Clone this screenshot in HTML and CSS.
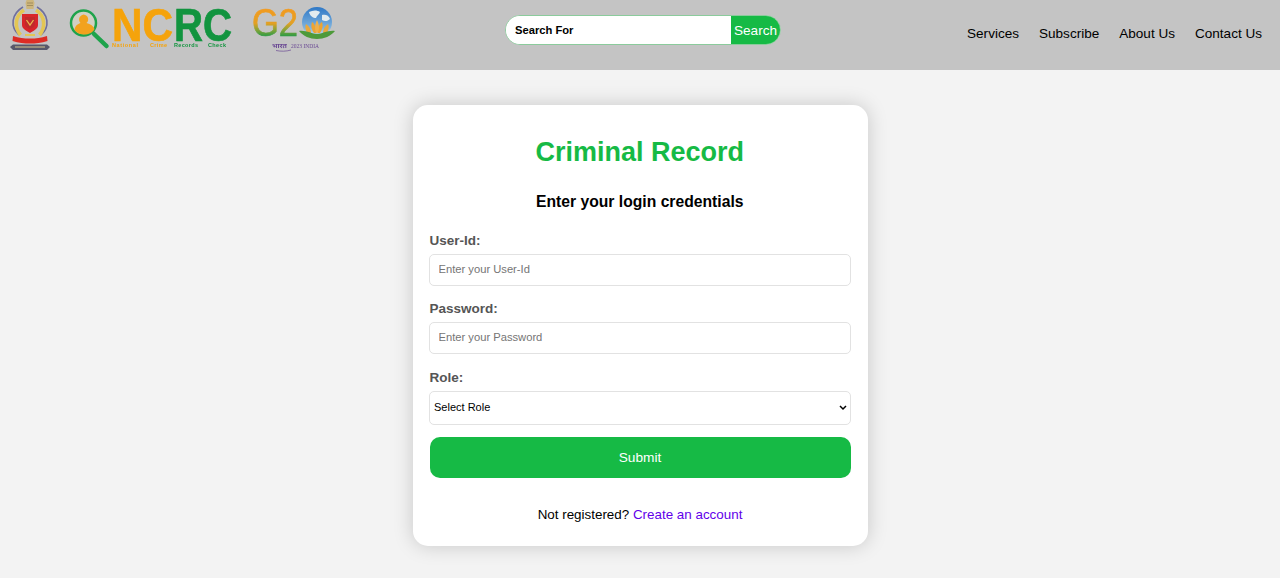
FILE: index.html
```html
<!DOCTYPE html>
<html lang="en">
<head>
<meta charset="utf-8">
<title>Criminal Record</title>
<link rel="stylesheet" href="styles.css">
</head>
<body>
<header class="topbar">
  <div class="logos">
    <svg class="logo logo-emblem" width="42" height="52" viewBox="0 0 42 52" aria-hidden="true">
      <path d="M16.500 0h7l1 3-1 6h-7l-1-6z" fill="#cdb67c"/>
      <path d="M17 3h6M17 5.500h6" stroke="#8f7d55" stroke-width=".7"/>
      <path d="M9 35C0 27 1 14 13 7" fill="none" stroke="#6f6f9c" stroke-width="1.600"/>
      <path d="M31 35c9-8 8-21-4-28" fill="none" stroke="#6f6f9c" stroke-width="1.600"/>
      <path d="M10.500 35C4 27 5 16 14 10" fill="none" stroke="#e3c655" stroke-width="3.600"/>
      <path d="M29.500 35c6.500-8 5.500-19-3.500-25" fill="none" stroke="#e3c655" stroke-width="3.600"/>
      <path d="M12 14h16v11c0 4-5 6-8 8-3-2-8-4-8-8z" fill="#d9252b"/>
      <path d="M15 17h10v7c0 3-3 4-5 5-2-1-5-2-5-5z" fill="#c02a2c"/>
      <path d="M16.500 20l3.500 5 3.500-5" fill="none" stroke="#eab84e" stroke-width="1.300"/>
      <path d="M15 34h10v2H15z" fill="#e3c655"/>
      <path d="M3 36c6 2 11 2.500 17 2.500s11-.5 17-2.500l.5 5c-6 2-12 2.500-17.500 2.500S8.500 43 2.500 41z" fill="#dc2c25"/>
      <path d="M0 47l3-2.500h34l3 2.500-3 3H3z" fill="#57576a"/>
      <path d="M5 47h30" stroke="#d6c68e" stroke-width="1"/>
    </svg>
    <svg class="logo logo-ncrc" width="164" height="44" viewBox="0 0 164 44" aria-hidden="true">
      <circle cx="13.500" cy="16" r="12.500" fill="#d2d0c4" stroke="#1ea34b" stroke-width="2.500"/>
      <path d="M4.500 23c.5-4 2.500-5.500 6-7-2-2-2.500-7 3-8.500 5 .5 6 6 3 8.500 4 1 7 3 8 6-2 4-6 5.500-10 5.500-4 0-8-1.500-10-4.500z" fill="#f2a21e"/>
      <path d="M24 27l12.500 12" stroke="#1ea34b" stroke-width="4.500" stroke-linecap="round"/>
      <text class="ncrc-big ncrc-orange" x="42" y="34" textLength="61" lengthAdjust="spacingAndGlyphs">NC</text>
      <text class="ncrc-big ncrc-green" x="104" y="34" textLength="58" lengthAdjust="spacingAndGlyphs">RC</text>
      <text class="ncrc-small ncrc-orange" x="42" y="40" textLength="26">National</text>
      <text class="ncrc-small ncrc-orange" x="80" y="40" textLength="17">Crime</text>
      <text class="ncrc-small ncrc-green" x="104" y="40" textLength="24">Records</text>
      <text class="ncrc-small ncrc-green" x="138" y="40" textLength="18">Check</text>
    </svg>
    <svg class="logo logo-g20" width="84" height="46" viewBox="0 0 84 46" aria-hidden="true">
      <defs>
        <linearGradient id="g20tri" gradientUnits="userSpaceOnUse" x1="0" y1="1" x2="0" y2="29">
          <stop offset="0" stop-color="#f39a1f"/>
          <stop offset=".55" stop-color="#e3a024"/>
          <stop offset=".78" stop-color="#86a437"/>
          <stop offset="1" stop-color="#2f9b45"/>
        </linearGradient>
        <linearGradient id="g20globe" x1="0" y1="0" x2="0" y2="1">
          <stop offset="0" stop-color="#2f78c6"/>
          <stop offset=".7" stop-color="#7fb3de"/>
          <stop offset="1" stop-color="#d5e6f3"/>
        </linearGradient>
      </defs>
      <text class="g20-text" x="0" y="29" textLength="46" lengthAdjust="spacingAndGlyphs" fill="url(#g20tri)" stroke="url(#g20tri)">G2</text>
      <circle cx="65" cy="15" r="15" fill="url(#g20globe)"/>
      <path d="M57 5c4-2 8-2 11 0-1 3-3 3-4 6-3 0-6-2-7-6zM70 8c3-1 7 0 8 4-2 2-5 3-8 1z" fill="#e2ebef"/>
      <path d="M55 26c-2-4-2-7-1-9 3 2 5 5 5 9zM75 26c2-4 2-7 1-9-3 2-5 5-5 9z" fill="#e9a83e"/>
      <path d="M62 26c-3-4-3-8-2-11 3 2 4 6 4 11zM68 26c3-4 3-8 2-11-3 2-4 6-4 11z" fill="#eea432"/>
      <path d="M65 27c-3-5-2-10 0-14 2 4 3 9 0 14z" fill="#f0b04a"/>
      <path d="M47 24c7-1 13 3 18 3s11-4 18-3c-4 5-11 8-18 8s-14-3-18-8z" fill="#4d9a3a"/>
      <text class="g20-hi" x="20" y="41">भारत</text>
      <text class="g20-year" x="39" y="41">2023 INDIA</text>
      <path d="M24 43.500c5 1 10 1 15-.5" fill="none" stroke="#6b4a94" stroke-width=".7"/>
    </svg>
  </div>
  <form class="search">
    <input class="search-input" type="text" placeholder="Search For">
    <button class="search-btn" type="button">Search</button>
  </form>
  <nav class="nav">
    <a href="#">Services</a>
    <a href="#">Subscribe</a>
    <a href="#">About Us</a>
    <a href="#">Contact Us</a>
  </nav>
</header>
<main class="page">
  <form class="card">
    <h1 class="title">Criminal Record</h1>
    <h2 class="subtitle">Enter your login credentials</h2>
    <label class="label" for="uid">User-Id:</label>
    <input class="field" id="uid" type="text" placeholder="Enter your User-Id">
    <label class="label" for="pw">Password:</label>
    <input class="field" id="pw" type="password" placeholder="Enter your Password">
    <label class="label label-role" for="role">Role:</label>
    <select class="select" id="role">
      <option>Select Role</option>
    </select>
    <button class="submit" type="button">Submit</button>
    <p class="foot">Not registered? <a href="#">Create an account</a></p>
  </form>
</main>
</body>
</html>
```
FILE: styles.css
```css
* { box-sizing: border-box; }
html, body { margin: 0; height: 100%; }
body {
  background: #f3f3f3;
  font-family: "Liberation Sans", Arial, sans-serif;
  color: #000;
  overflow: hidden;
}
.topbar {
  height: 70px;
  background: #c4c4c4;
  display: grid;
  grid-template-columns: 495px 276px 1fr;
  padding: 0 18px 0 10px;
}
.logos { display: flex; align-items: flex-start; }
.logo { filter: blur(.35px); flex: none; overflow: visible; }
.logo-ncrc { margin: 7px 0 0 18px; }
.logo-g20 { margin: 7px 0 0 18px; }
.ncrc-big { font: 700 46px "Liberation Sans", sans-serif; stroke-width: .7px; }
.ncrc-small { font: 700 5.500px "Liberation Sans", sans-serif; }
.ncrc-orange { fill: #f5a30b; stroke: #f5a30b; }
.ncrc-small.ncrc-orange, .ncrc-small.ncrc-green { stroke: none; }
.ncrc-green { fill: #12943f; stroke: #12943f; }
.g20-text { font: 400 38px "Liberation Sans", sans-serif; stroke-width: .7px; }
.g20-hi { font: 700 7px "Noto Sans", "Noto Sans CJK SC", sans-serif; fill: #6b4a94; }
.g20-year { font: 400 5.500px "Liberation Serif", serif; fill: #6b4a94; }
.search {
  margin-top: 15px;
  height: 30px;
  display: flex;
  border: 1px solid #8bcb9c;
  border-radius: 15px;
  overflow: hidden;
  background: #fff;
}
.search-input {
  flex: 1;
  min-width: 0;
  border: 0;
  outline: 0;
  padding: 0 0 0 9px;
  font: 700 11.200px "Liberation Sans", sans-serif;
}
.search-input::placeholder { color: #000; opacity: 1; }
.search-btn {
  width: 49px;
  border: 0;
  padding: 0;
  background: #16ba45;
  color: #fff;
  font: 400 13.600px "Liberation Sans", sans-serif;
}
.nav {
  display: flex;
  justify-content: flex-end;
  gap: 20px;
  margin-top: 26px;
  font-size: 13.550px;
  line-height: 16px;
  align-self: start;
}
.nav a { color: #000; text-decoration: none; }
.page {
  display: flex;
  justify-content: center;
  padding-top: 35px;
}
.card {
  width: 455px;
  height: 441px;
  padding: 31px 17px 0 16.500px;
  background: #fff;
  border-radius: 15px;
  box-shadow: 0 0 20px rgba(0, 0, 0, .18);
  display: flex;
  flex-direction: column;
}
.title {
  margin: 0;
  color: #16ba45;
  font-size: 27px;
  line-height: 33px;
  text-align: center;
}
.subtitle {
  margin: 24px 0 0;
  font-size: 15.700px;
  line-height: 18px;
  text-align: center;
}
.label {
  margin-top: 15px;
  padding-left: .5px;
  color: #555;
  font-size: 13.500px;
  font-weight: 700;
  line-height: 16px;
}
.label-role { margin-top: 16px; }
.subtitle + .label { margin-top: 22px; }
.field {
  height: 32px;
  margin-top: 5px;
  padding: 0 8.500px 2px;
  border: 1px solid #e2e2e2;
  border-radius: 5px;
  font: 400 11.200px "Liberation Sans", sans-serif;
  outline: 0;
}
.field::placeholder { color: #757575; }
.select {
  height: 34px;
  margin-top: 5px;
  padding: 0 0 2px 4px;
  border: 1px solid #e2e2e2;
  border-radius: 5px;
  background: #fff url("data:image/svg+xml,%3Csvg xmlns='http://www.w3.org/2000/svg' width='8' height='6'%3E%3Cpath d='M1 1l3 3 3-3' fill='none' stroke='%23000' stroke-width='1.500'/%3E%3C/svg%3E") no-repeat right 3px center;
  color: #000;
  font: 400 11px "Liberation Sans", sans-serif;
  appearance: none;
}
.submit {
  height: 41px;
  margin: 12px 0 0 .5px;
  border: 0;
  border-radius: 10px;
  background: #16ba45;
  color: #fff;
  font: 400 13.700px "Liberation Sans", sans-serif;
}
.foot {
  margin: 29px 0 0;
  padding-left: .5px;
  font-size: 13.400px;
  line-height: 16px;
  text-align: center;
}
.foot a { color: #6200ea; text-decoration: none; }
```
